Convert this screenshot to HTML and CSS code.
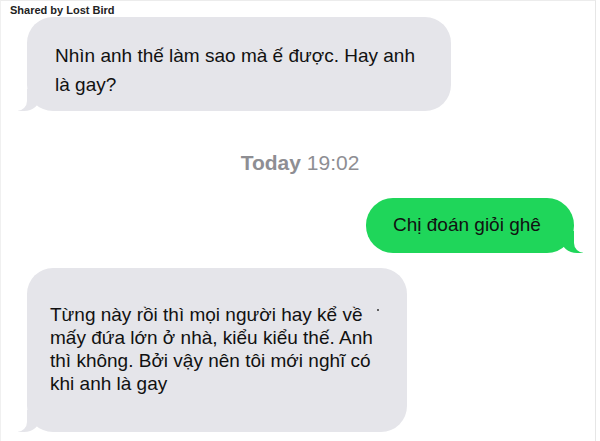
FILE: index.html
```html
<!DOCTYPE html>
<html>
<head>
<meta charset="utf-8">
<link rel="stylesheet" href="styles.css">
</head>
<body>
<div class="frame">
  <div class="shared">Shared by Lost Bird</div>
  <div class="bubble in first">Nhìn anh thế làm sao mà ế được. Hay anh<br>là gay?</div>
  <div class="stamp"><b>Today</b> 19:02</div>
  <div class="row-out">
    <div class="bubble out">Chị đoán giỏi ghê</div>
  </div>
  <div class="bubble in third">Từng này rồi thì mọi người hay kể về<br>mấy đứa lớn ở nhà, kiểu kiểu thế. Anh<br>thì không. Bởi vậy nên tôi mới nghĩ có<br>khi anh là gay<span class="speck"></span></div>
</div>
</body>
</html>
```
FILE: styles.css
```css
html, body {
  margin: 0;
  padding: 0;
  background: #ffffff;
}
body {
  width: 600px;
  height: 441px;
  overflow: hidden;
  font-family: "Liberation Sans", Arial, sans-serif;
}
.frame {
  width: 594px;
  height: 440px;
  border-top: 1px solid #ececec;
  border-right: 1px solid #e6e6e6;
  border-left: 1px solid #f0f0f0;
  display: flex;
  flex-direction: column;
}
.shared {
  font-size: 11px;
  font-weight: bold;
  color: #222;
  line-height: 13px;
  padding: 3px 0 0 9px;
  height: 13px;
}
.bubble {
  position: relative;
  color: #111;
  white-space: nowrap;
  box-sizing: border-box;
}
.bubble.in {
  background: #e5e5ea;
  margin-left: 26px;
}
.bubble.in::before {
  content: "";
  position: absolute;
  left: -9px;
  bottom: 0;
  width: 22px;
  height: 22px;
  background: #e5e5ea;
  border-bottom-right-radius: 16px 14px;
}
.bubble.in::after {
  content: "";
  position: absolute;
  left: -13px;
  bottom: 0;
  width: 13px;
  height: 24px;
  background: #ffffff;
  border-bottom-right-radius: 10px;
}
.first {
  width: 424px;
  height: 94px;
  border-radius: 26px;
  font-size: 19px;
  line-height: 29px;
  padding: 24px 0 0 28px;
}
.stamp {
  text-align: center;
  color: #8e8e93;
  font-size: 21px;
  line-height: 24px;
  margin-top: 40px;
  padding-left: 4px;
}
.stamp b {
  font-weight: bold;
}
.row-out {
  display: flex;
  justify-content: flex-end;
  margin-top: 23px;
  padding-right: 21px;
}
.bubble.out {
  background: #1fd65a;
  width: 208px;
  height: 55px;
  border-radius: 27px;
  font-size: 19px;
  line-height: 23px;
  padding: 15px 0 0 27px;
}
.bubble.out::before {
  content: "";
  position: absolute;
  right: -9px;
  bottom: 0;
  width: 22px;
  height: 22px;
  background: #1fd65a;
  border-bottom-left-radius: 16px 14px;
}
.bubble.out::after {
  content: "";
  position: absolute;
  right: -13px;
  bottom: 0;
  width: 13px;
  height: 24px;
  background: #ffffff;
  border-bottom-left-radius: 10px;
}
.third {
  width: 380px;
  height: 164px;
  margin-top: 15px;
  border-radius: 26px;
  font-size: 19px;
  line-height: 23px;
  padding: 35px 0 0 23px;
}
.speck {
  position: absolute;
  left: 350px;
  top: 41px;
  width: 2px;
  height: 2px;
  background: #333;
  border-radius: 1px;
}
```
